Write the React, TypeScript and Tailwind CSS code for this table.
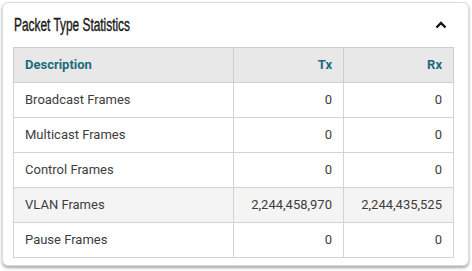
import React from "react";

const rows = [
  { d: "Broadcast Frames", tx: "0", rx: "0" },
  { d: "Multicast Frames", tx: "0", rx: "0" },
  { d: "Control Frames", tx: "0", rx: "0" },
  { d: "VLAN Frames", tx: "2,244,458,970", rx: "2,244,435,525", alt: true },
  { d: "Pause Frames", tx: "0", rx: "0" },
];

export default function App() {
  return (
    <div className="w-[472px] h-[271px] bg-white pt-[2px] pl-[2px] pr-[2px]">
      <div className="w-[467px] h-[264px] rounded-[6px] border border-[#dcdcdc] bg-white shadow-[0_2px_3px_rgba(0,0,0,0.35)] pt-[11px] px-[10px]">
        <div className="flex items-center justify-between h-[22px] mb-[11px]">
          <span
            className="inline-block text-[18px] text-[#1a1a1a] leading-none origin-left scale-x-[0.66] whitespace-nowrap ml-[1px] [-webkit-text-stroke:0.4px_#1a1a1a]"
            style={{ fontFamily: '"Liberation Sans", sans-serif' }}
          >
            Packet Type Statistics
          </span>
          <svg width="12" height="8" viewBox="0 0 12 8" className="mr-[11px]">
            <path d="M1.5 6.5 L6 2 L10.5 6.5" fill="none" stroke="#111" strokeWidth="2.4" />
          </svg>
        </div>
        <table
          className="w-[441px] border-collapse text-[13px] text-[#3d3d3d]"
          style={{ fontFamily: "Roboto, sans-serif" }}
        >
          <thead>
            <tr className="bg-[#e8e8e8] h-[35px]">
              <th className="border border-[#cfcfcf] text-left font-bold text-[#1c6b7c] pl-[11px] w-[220px]">Description</th>
              <th className="border border-[#cfcfcf] text-right font-bold text-[#1c6b7c] pr-[11px] w-[110px]">Tx</th>
              <th className="border border-[#cfcfcf] text-right font-bold text-[#1c6b7c] pr-[11px]">Rx</th>
            </tr>
          </thead>
          <tbody>
            {rows.map((r) => (
              <tr key={r.d} className={r.alt ? "bg-[#f4f4f4] h-[35px]" : "bg-white h-[35px]"}>
                <td className="border border-[#d4d4d4] pl-[11px]">{r.d}</td>
                <td className="border border-[#d4d4d4] text-right pr-[11px]">{r.tx}</td>
                <td className="border border-[#d4d4d4] text-right pr-[11px]">{r.rx}</td>
              </tr>
            ))}
          </tbody>
        </table>
      </div>
    </div>
  );
}
